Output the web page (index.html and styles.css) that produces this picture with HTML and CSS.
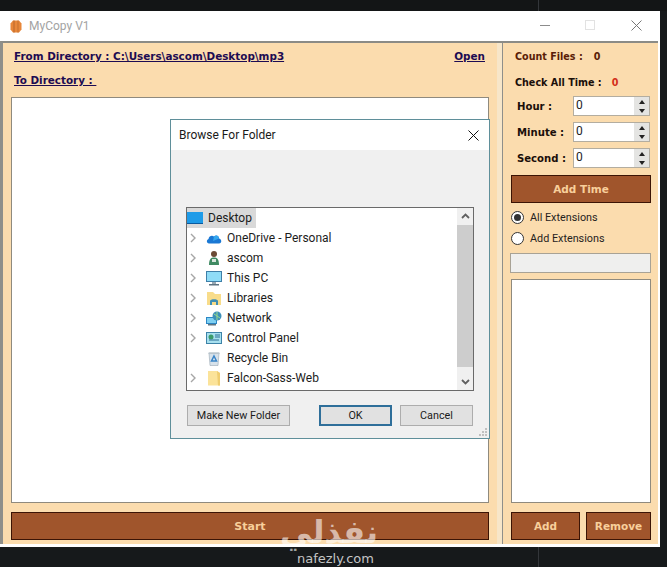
FILE: index.html
```html
<!DOCTYPE html>
<html lang="en">
<head>
<meta charset="utf-8">
<title>MyCopy V1</title>
<link rel="stylesheet" href="styles.css">
</head>
<body>
<div class="desktop">
  <div class="strip strip-top"><i class="seam"></i></div>
  <div class="window">
    <header class="titlebar">
      <svg class="app-icon" width="12" height="13" viewBox="0 0 12 13"><path d="M3 .5H9L11.500 3.500V9.500L9 12.500H3L.5 9.500V3.500Z" fill="#e8873a"/><rect x="3.500" y=".5" width="1" height="12" fill="#b8662a"/><rect x="7.500" y=".5" width="1" height="12" fill="#c4702e"/></svg>
      <span class="app-title">MyCopy V1</span>
      <div class="controls">
        <svg width="10" height="10" viewBox="0 0 10 10"><path d="M0 5.500H10" stroke="#8c8c8c" fill="none"/></svg>
        <svg width="10" height="10" viewBox="0 0 10 10"><rect x=".5" y=".5" width="9" height="9" stroke="#e2e2e2" fill="none"/></svg>
        <svg class="close" width="11" height="11" viewBox="0 0 11 11"><path d="M.5 .5L10.500 10.500M10.500 .5L.5 10.500" stroke="#777" fill="none"/></svg>
      </div>
    </header>
    <main class="client">
      <section class="left">
        <div class="dir-row">
          <span class="link">From Directory : C:\Users\ascom\Desktop\mp3</span>
          <span class="link open">Open</span>
        </div>
        <div class="dir-row second"><span class="link">To Directory : </span></div>
        <div class="listbox"></div>
        <button class="btn start">Start</button>
      </section>
      <aside class="right">
        <div class="stat count"><span>Count Files :</span><span class="count-val">0</span></div>
        <div class="stat check"><span>Check All Time :</span><span class="check-val">0</span></div>
        <div class="time-row"><label>Hour :</label><div class="spin"><span class="spin-val">0</span><span class="spin-btns"><b class="up"></b><b class="down"></b></span></div></div>
        <div class="time-row"><label>Minute :</label><div class="spin"><span class="spin-val">0</span><span class="spin-btns"><b class="up"></b><b class="down"></b></span></div></div>
        <div class="time-row"><label>Second :</label><div class="spin"><span class="spin-val">0</span><span class="spin-btns"><b class="up"></b><b class="down"></b></span></div></div>
        <button class="btn add-time">Add Time</button>
        <div class="radio first"><i class="dot on"></i><span>All Extensions</span></div>
        <div class="radio"><i class="dot"></i><span>Add Extensions</span></div>
        <div class="ext-input"></div>
        <div class="ext-list"></div>
        <div class="ext-btns">
          <button class="btn add">Add</button>
          <button class="btn remove">Remove</button>
        </div>
      </aside>
    </main>
  </div>
  <div class="strip strip-bottom"><i class="seam"></i></div>

  <div class="dialog">
    <div class="dlg-title">
      <span>Browse For Folder</span>
      <svg width="11" height="11" viewBox="0 0 11 11"><path d="M.5 .5L10.500 10.500M10.500 .5L.5 10.500" stroke="#111" fill="none"/></svg>
    </div>
    <div class="dlg-body">
      <div class="tree">
        <ul class="rows">
          <li class="row root">
            <svg class="ico" width="16" height="20" viewBox="0 0 16 20"><rect width="16" height="20" fill="#d9d9d9"/><rect width="16" height="12" y="4" fill="#1e9be8"/><rect y="15" width="16" height="1" fill="#0b5a9e"/></svg>
            <span class="sel">Desktop</span>
          </li>
          <li class="row"><svg class="chev" width="6" height="10" viewBox="0 0 6 10"><path d="M1 1L5 5L1 9" stroke="#a6a6a6" stroke-width="1.400" fill="none"/></svg>
            <svg class="ico" width="16" height="12" viewBox="0 0 16 12"><path d="M3 11.500C.5 11.500 0 8 2.500 7C3 4 6 3 8 4.500C10 2.500 13 3.500 13 6.500C15.500 6.500 16.500 11.500 13 11.500Z" fill="#1a78d4"/><path d="M8 4.500C10 2.500 13 3.500 13 6.500L7 9Z" fill="#35a7ee"/></svg><span>OneDrive - Personal</span></li>
          <li class="row"><svg class="chev" width="6" height="10" viewBox="0 0 6 10"><path d="M1 1L5 5L1 9" stroke="#a6a6a6" stroke-width="1.400" fill="none"/></svg>
            <svg class="ico" width="16" height="16" viewBox="0 0 16 16"><circle cx="8" cy="4" r="3" fill="#6b4a35"/><path d="M3 15C3 9 5 7.500 8 7.500S13 9 13 15Z" fill="#3f8a62"/><rect x="6" y="9" width="4" height="3" fill="#d9e6dd"/></svg><span>ascom</span></li>
          <li class="row"><svg class="chev" width="6" height="10" viewBox="0 0 6 10"><path d="M1 1L5 5L1 9" stroke="#a6a6a6" stroke-width="1.400" fill="none"/></svg>
            <svg class="ico" width="16" height="15" viewBox="0 0 16 15"><rect width="16" height="11" fill="#3f7fa8"/><rect x="1" y="1" width="14" height="9" fill="#8fdcf7"/><rect x="6" y="11" width="4" height="2" fill="#9aa9b3"/><rect x="3" y="13" width="10" height="1.500" fill="#5f7482"/></svg><span>This PC</span></li>
          <li class="row"><svg class="chev" width="6" height="10" viewBox="0 0 6 10"><path d="M1 1L5 5L1 9" stroke="#a6a6a6" stroke-width="1.400" fill="none"/></svg>
            <svg class="ico" width="16" height="15" viewBox="0 0 16 15"><path d="M1 1H7L9 3H15V14H1Z" fill="#f8dc8a"/><path d="M4 14V10C4 7.500 12 7.500 12 10V14H10V11H6V14Z" fill="#3f8fb5"/></svg><span>Libraries</span></li>
          <li class="row"><svg class="chev" width="6" height="10" viewBox="0 0 6 10"><path d="M1 1L5 5L1 9" stroke="#a6a6a6" stroke-width="1.400" fill="none"/></svg>
            <svg class="ico" width="16" height="15" viewBox="0 0 16 15"><rect x="0" y="6" width="11" height="7" fill="#2c86c4"/><rect x="1" y="7" width="9" height="5" fill="#7fd0f2"/><rect x="2" y="13" width="8" height="1.500" fill="#5f7482"/><circle cx="11" cy="5" r="4.500" fill="#3d8fb8"/><path d="M8 3L14 7M11 1V9" stroke="#9adb8c"/></svg><span>Network</span></li>
          <li class="row"><svg class="chev" width="6" height="10" viewBox="0 0 6 10"><path d="M1 1L5 5L1 9" stroke="#a6a6a6" stroke-width="1.400" fill="none"/></svg>
            <svg class="ico" width="16" height="12" viewBox="0 0 16 12"><rect width="16" height="12" fill="#3d83a8"/><rect x="1" y="1" width="14" height="10" fill="#a8e0ef"/><circle cx="5" cy="5" r="2.500" fill="#3c9b6b"/><path d="M9 3H14M9 5H14M3 8H13" stroke="#2c6f96"/></svg><span>Control Panel</span></li>
          <li class="row"><svg class="ico" width="16" height="15" viewBox="0 0 16 15"><path d="M3 2H13L12 14.500H4Z" fill="#d6e1ea" stroke="#9aa8b4" stroke-width=".6"/><path d="M2.500 1.500H13.500V3H2.500Z" fill="#b9c4cc"/><path d="M8 5L10.500 10H5.500Z" fill="none" stroke="#3a85c8" stroke-width="1.500"/></svg><span>Recycle Bin</span></li>
          <li class="row"><svg class="chev" width="6" height="10" viewBox="0 0 6 10"><path d="M1 1L5 5L1 9" stroke="#a6a6a6" stroke-width="1.400" fill="none"/></svg>
            <svg class="ico" width="16" height="16" viewBox="0 0 16 16"><path d="M2 1H11L14 3V15.500H2Z" fill="#fbe39a"/><path d="M11 1L14 3V15.500H12Z" fill="#efcd70"/></svg><span>Falcon-Sass-Web</span></li>
        </ul>
        <div class="scrollbar">
          <svg width="9" height="6" viewBox="0 0 9 6"><path d="M1 5L4.500 1.500L8 5" stroke="#606060" stroke-width="1.800" fill="none"/></svg>
          <div class="thumb"></div>
          <svg width="9" height="6" viewBox="0 0 9 6"><path d="M1 1L4.500 4.500L8 1" stroke="#606060" stroke-width="1.800" fill="none"/></svg>
        </div>
      </div>
      <div class="dlg-btns">
        <button class="win-btn new">Make New Folder</button>
        <span class="grow"></span>
        <button class="win-btn ok">OK</button>
        <button class="win-btn">Cancel</button>
      </div>
    </div>
    <svg class="grip" width="10" height="10" viewBox="0 0 10 10"><path d="M7 1h2v2H7zM4 4h2v2H4zM7 4h2v2H7zM1 7h2v2H1zM4 7h2v2H4zM7 7h2v2H7z" fill="#c0c0c0"/></svg>
  </div>

  <div class="mark-ar" lang="ar" dir="rtl">نفذلي</div>
  <div class="mark-en">nafezly.com</div>
</div>
</body>
</html>
```
FILE: styles.css
```css
* { box-sizing: border-box; }
html, body { margin: 0; height: 100%; }
body { background: #16191b; overflow: hidden; }

.desktop { position: relative; width: 667px; height: 567px; background: #16191b; }
.strip { position: relative; }
.strip-top { height: 11px; background: #131516; }
.strip-bottom { height: 20px; }
.seam { position: absolute; left: 538px; top: 0; bottom: 0; width: 1px; background: #33363a; }

.window { width: 660px; height: 536px; background: #fff; display: flex; flex-direction: column; }

.titlebar { height: 30px; flex: none; display: flex; align-items: center; padding-left: 10px; background: #fff; }
.app-icon { margin-right: 7px; }
.app-title { font: 12px Roboto, sans-serif; color: #a3a3a3; }
.controls { margin-left: auto; display: flex; align-items: center; gap: 35px; padding: 0 18px 2px 0; }
.close { margin-left: 1px; }

.client { flex: 1; min-height: 0; display: flex; border-top: 2px solid #8b8b86; border-left: 3px solid #8f8f8a; margin-bottom: 3px; margin-right: 2px; background: #f7e6c9; }

.left { width: 494px; flex: none; display: flex; flex-direction: column; padding: 2px 8px 4px 8px; background: #fbdcae; font: bold 10.4px "DejaVu Sans", sans-serif; }
.dir-row { display: flex; justify-content: space-between; align-items: center; height: 16px; padding: 0 4px 0 3px; margin-top: 3px; }
.dir-row.second { margin-top: 8px; }
.link { color: #1d0b52; text-decoration: underline; white-space: pre; }
.listbox { flex: 1; margin-top: 9px; background: #fff; border: 1px solid #8f8a7e; }

.btn { display: block; background: #a0552c; border: 1px solid #3b1405; color: #f8cf9b; font: bold 10.5px "DejaVu Sans", sans-serif; padding: 0; }
.start { height: 28px; margin-top: 9px; width: 478px; font-size: 11px; }

.right { width: 156px; flex: none; margin-left: 5px; border-left: 1px solid #8f8f8a; background: #fbdcae; padding: 4px 7px 4px 8px; font: bold 10.1px "DejaVu Sans", sans-serif; color: #1a0f0a; }
.stat { display: flex; height: 16px; align-items: center; padding-left: 4px; font-size: 9.6px; }
.count { margin-top: 1px; color: #5a1d08; }
.count-val { margin-left: 11px; }
.check { margin-top: 10px; }
.check-val { margin-left: 10px; color: #d32f1a; }

.time-row { display: flex; align-items: center; height: 20px; margin-top: 6px; padding-left: 6px; }
.time-row label { width: 56px; flex: none; }
.spin { width: 77px; height: 20px; flex: none; display: flex; justify-content: space-between; background: #fff; border: 1px solid #b3ada0; font: 12px Roboto, sans-serif; color: #222; }
.spin-val { padding-left: 2px; line-height: 17px; }
.spin-btns { width: 15px; display: flex; flex-direction: column; background: #e4e4e2; }
.spin-btns b { flex: 1; display: flex; align-items: center; justify-content: center; }
.up::before { content: ""; border: 3.5px solid transparent; border-top: 0; border-bottom: 4px solid #222; }
.down::before { content: ""; border: 3.5px solid transparent; border-bottom: 0; border-top: 4px solid #222; }

.add-time { width: 140px; height: 28px; margin-top: 7px; }
.radio { display: flex; align-items: center; height: 17px; margin-top: 4px; font: 10.8px Roboto, sans-serif; color: #26221d; }
.radio.first { margin-top: 6px; }
.dot { width: 13px; height: 13px; border-radius: 50%; border: 1px solid #333; background: #fff; margin-right: 6px; display: flex; align-items: center; justify-content: center; }
.dot.on::after { content: ""; width: 7px; height: 7px; border-radius: 50%; background: #333; }

.ext-input { width: 141px; height: 20px; margin: 6px 0 0 -1px; background: #efefee; border: 1px solid #a8a295; }
.ext-list { width: 140px; height: 224px; margin-top: 6px; background: #fff; border: 1px solid #8f8a7e; }
.ext-btns { display: flex; justify-content: space-between; margin-top: 9px; width: 140px; }
.ext-btns .btn { height: 28px; }
.add { width: 69px; }
.remove { width: 65px; }

.dialog { position: absolute; left: 170px; top: 119px; width: 320px; height: 320px; background: #f0f0f0; border: 1px solid #5f8f9a; display: flex; flex-direction: column; }
.dlg-title { height: 30px; flex: none; background: #fff; display: flex; align-items: center; justify-content: space-between; padding: 0 10px 0 8px; font: 12px Roboto, sans-serif; color: #1a1a1a; }
.dlg-body { flex: 1; display: flex; flex-direction: column; padding: 57px 15px 0 15px; }
.tree { height: 184px; flex: none; display: flex; background: #fff; border: 1px solid #6a6a6a; }
.rows { flex: 1; margin: 0; padding: 0; list-style: none; font: 12px Roboto, sans-serif; color: #1c1c1c; }
.row { height: 20px; display: flex; align-items: center; padding-left: 19px; position: relative; }
.row .ico { margin-right: 5px; flex: none; }
.row.root { padding-left: 0; }
.row.root .ico { margin-right: 0; }
.sel { background: #d9d9d9; height: 20px; line-height: 20px; padding: 0 4px 0 5px; }
.chev { position: absolute; left: 3px; top: 5px; }
.scrollbar { width: 16px; flex: none; background: #f0f0f0; display: flex; flex-direction: column; align-items: center; justify-content: space-between; padding: 5px 0; }
.thumb { flex: 1; width: 100%; margin: 6px 0 12px; background: #cdcdcd; }
.dlg-btns { display: flex; align-items: center; gap: 8px; margin-top: 14px; padding: 0 1px 0 1px; }
.grow { flex: 1; }
.win-btn { width: 73px; height: 21px; padding: 0; background: #e1e1e1; border: 1px solid #adadad; font: 10.8px Roboto, sans-serif; color: #1a1a1a; }
.win-btn.new { width: 103px; }
.win-btn.ok { border: 2px solid #2f6f9a; }
.grip { position: absolute; right: 1px; bottom: 1px; }

.mark-ar { position: absolute; left: 290px; top: 514px; width: 88px; text-align: center; font: bold 32px/36px "DejaVu Sans", sans-serif; color: rgba(255, 255, 255, .6); }
.mark-en { position: absolute; left: 297px; top: 551px; font: 13px/16px "DejaVu Sans", sans-serif; color: #c4c4c4; }
```
